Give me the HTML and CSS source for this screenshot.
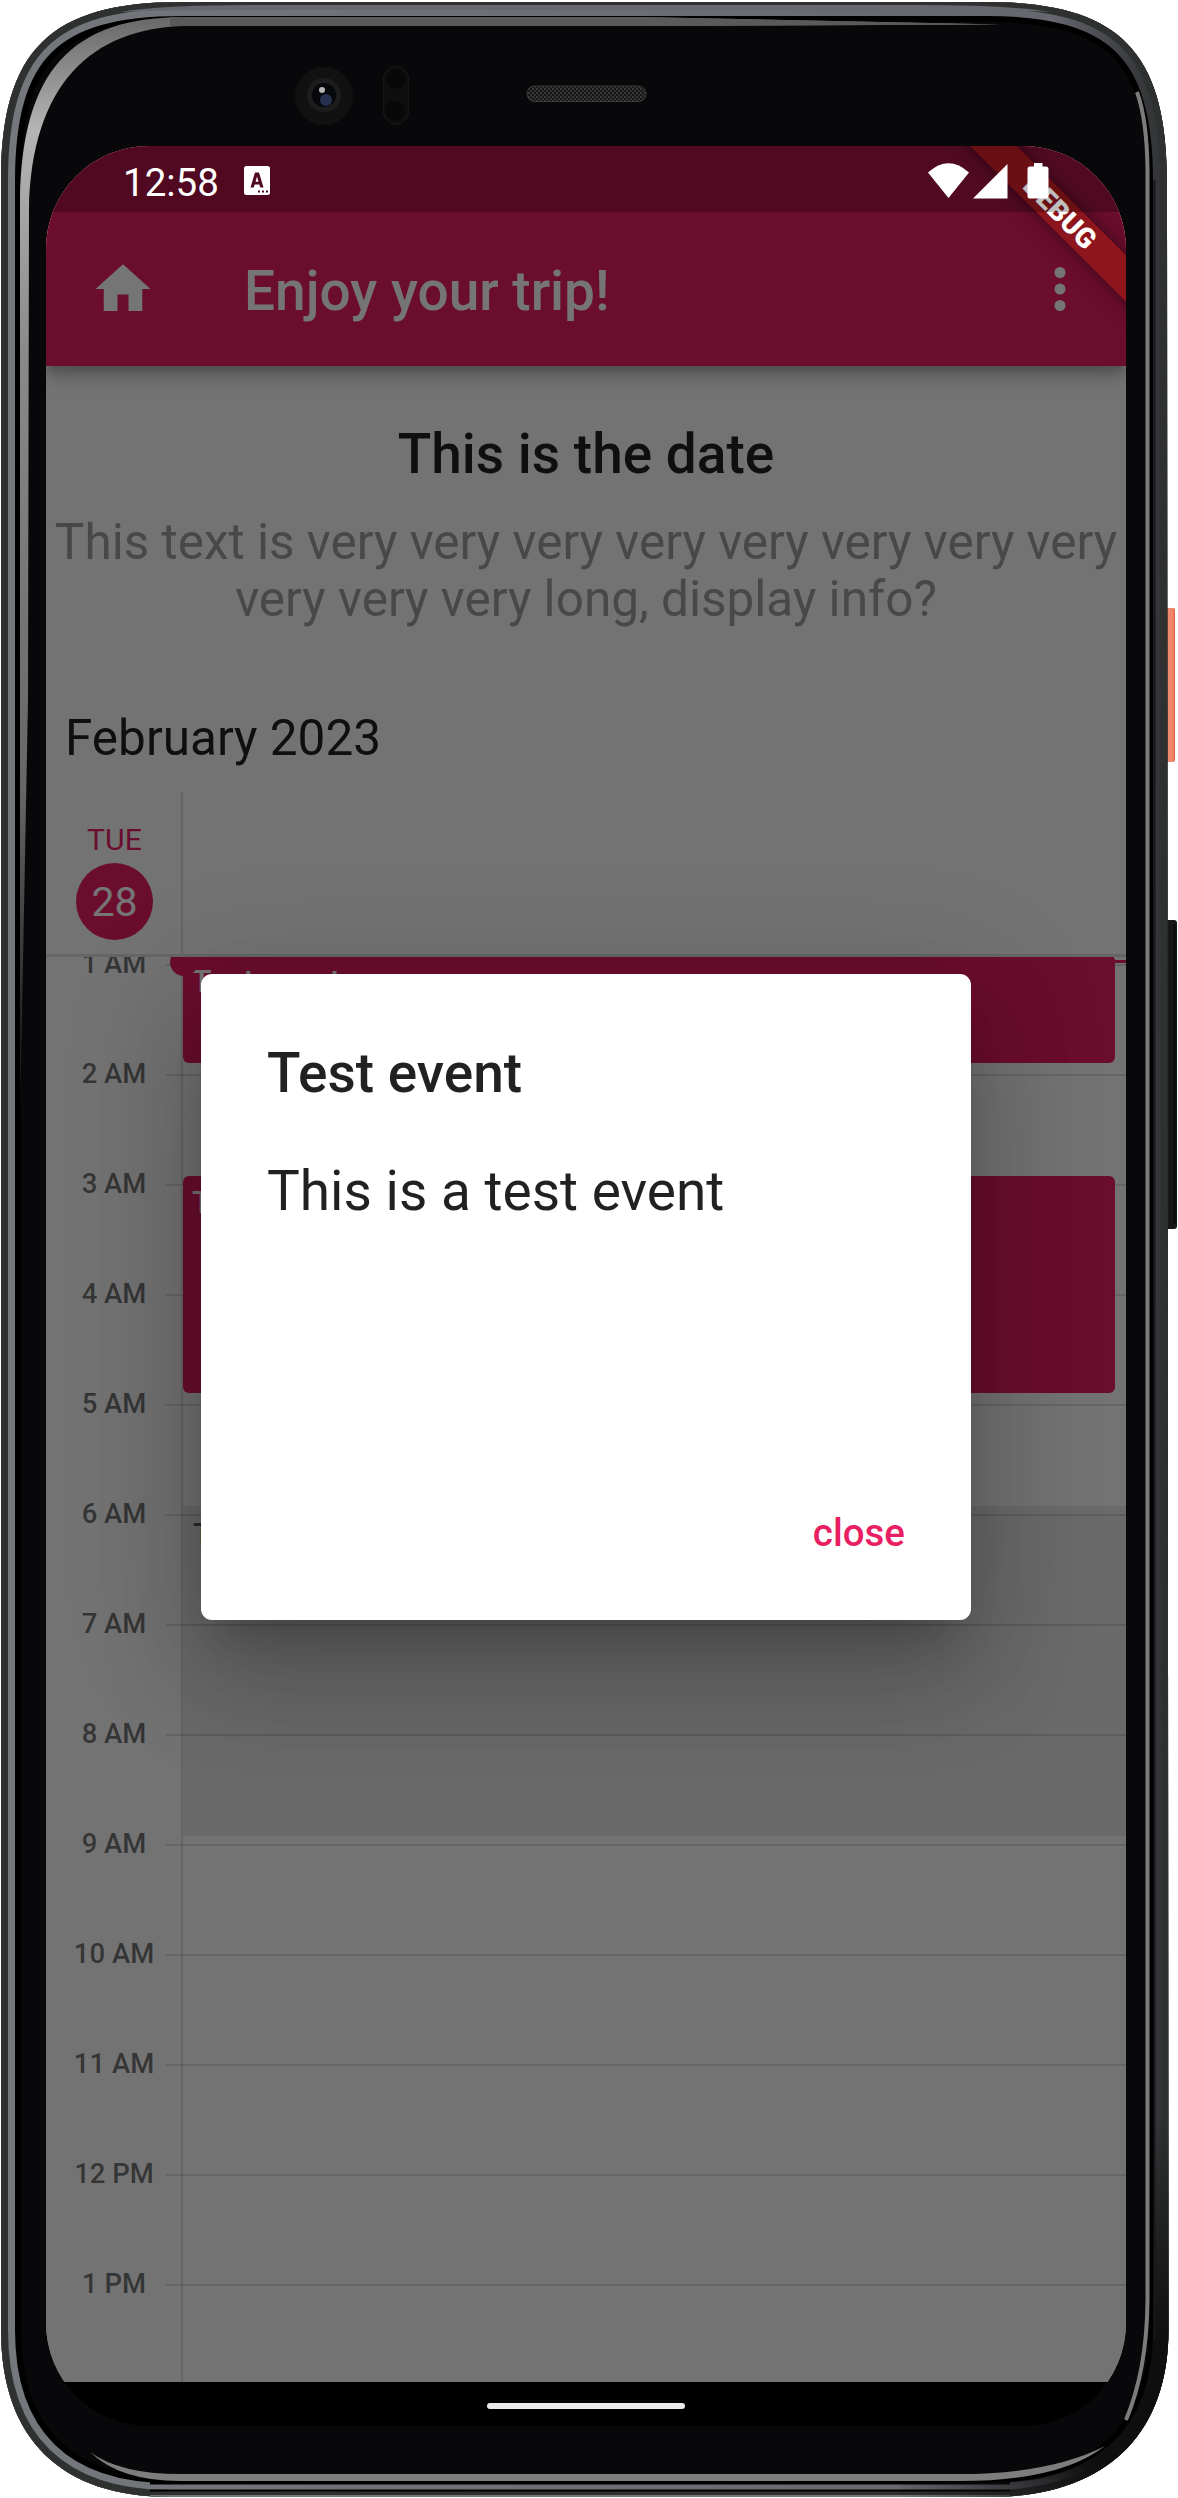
FILE: index.html
```
<!DOCTYPE html>
<html lang="en">
<head>
<meta charset="utf-8">
<title>Enjoy your trip!</title>
<link rel="stylesheet" href="styles.css">
</head>
<body>
<div class="phone">
  <svg class="frame" viewBox="0 0 1178 2498" aria-hidden="true">
    <defs>
      <path id="shell" d="M1 181C1 50 50 2 181 2H987C1118 2 1167 50 1167 181L1168.500 2330C1168.500 2440 1100 2497 990 2497H170C62 2497 1 2440 1 2330Z"/>
      <clipPath id="shellClip"><use href="#shell"/></clipPath>
      <linearGradient id="rail" x1="0" x2="1" y1="0" y2="0">
        <stop offset="0" stop-color="#74777c"/><stop offset=".9" stop-color="#66676f"/><stop offset=".97" stop-color="#3a3b3e"/><stop offset="1" stop-color="#303234"/>
      </linearGradient>
      <linearGradient id="lowerRim" x1="900" y1="2497" x2="1168" y2="2120" gradientUnits="userSpaceOnUse">
        <stop offset="0" stop-color="#0f0f10" stop-opacity="0"/><stop offset=".3" stop-color="#0f0f10"/><stop offset=".6" stop-color="#0f0f10"/><stop offset="1" stop-color="#0f0f10" stop-opacity="0"/>
      </linearGradient>
      <linearGradient id="glowLeft" x1="0" x2="0" y1="20" y2="1120" gradientUnits="userSpaceOnUse">
        <stop offset="0" stop-color="#6a6a6a"/><stop offset=".1" stop-color="#b5b5b5"/><stop offset=".3" stop-color="#8a8a8a"/><stop offset=".7" stop-color="#666"/><stop offset="1" stop-color="#0a0a0a"/>
      </linearGradient>
      <linearGradient id="power" x1="0" x2="1" y1="0" y2="0">
        <stop offset="0" stop-color="#e0573b"/><stop offset=".4" stop-color="#f08a70"/><stop offset=".8" stop-color="#f0846a"/><stop offset="1" stop-color="#d9603f"/>
      </linearGradient>
      <pattern id="mesh" width="4" height="4" patternUnits="userSpaceOnUse">
        <rect width="4" height="4" fill="#161616"/><circle cx="1" cy="1" r=".9" fill="#4a4a4a"/><circle cx="3" cy="3" r=".9" fill="#3e3e3e"/>
      </pattern>
    </defs>
    <rect x="1164" y="608" width="11" height="154" rx="2" fill="url(#power)"/>
    <rect x="1164" y="920" width="13" height="309" rx="3" fill="#161717"/>
    <path d="M1174.500 924V1224" stroke="#070707" stroke-width="1.500"/>
    <g clip-path="url(#shellClip)" fill="none">
      <use href="#shell" fill="#08080a"/>
      <use href="#shell" stroke="#000" stroke-width="40"/>
      <use href="#shell" stroke="url(#rail)" stroke-width="28"/>
      <use href="#shell" stroke="#2f3131" stroke-width="14"/>
      <path d="M120 12Q160 5 250 5H920Q1010 5 1050 12Q1010 10 920 10H250Q160 10 120 12Z" fill="#66676f"/>
      <path d="M150 2483H1010" stroke="#000" stroke-width="3"/>
      <path d="M150 2490.500H1010" stroke="#000" stroke-width="2"/>
      <path d="M150 2496H1010" stroke="#777" stroke-width="2"/>
      <path d="M900 2490H990C1100 2490 1161 2436 1161 2330V2120" stroke="url(#lowerRim)" stroke-width="16"/>
      <path d="M1154.500 180V2340" stroke="#17181a" stroke-width="2"/>
    </g>
    <path d="M20 1120V200C22 70 72 17 185 17H640L1000 24.500L640 26H185C92 28 31 84 29 210L28 700Z" fill="url(#glowLeft)"/>
    <path d="M170 17H640L1000 24.500L640 26H170Z" fill="#5a5a5a"/>
    <path d="M1137 92Q1147 120 1147.500 170V2300Q1147 2370 1126 2420" fill="none" stroke="#7c7c7c" stroke-width="4"/>
    <path d="M90 2452Q120 2474 180 2474H960Q1050 2474 1105 2446Q1060 2481 960 2481H180Q120 2481 90 2452Z" fill="#7c7d7d"/>
    <circle cx="324" cy="96" r="29" fill="#111112"/>
    <circle cx="324" cy="95" r="17" fill="#1c1c1c"/>
    <circle cx="324" cy="95" r="12" fill="#07080c"/>
    <circle cx="326" cy="100" r="6" fill="#26304f"/>
    <circle cx="322" cy="90" r="3" fill="#b5b5b5"/>
    <rect x="383.500" y="66.500" width="25" height="58" rx="12.500" fill="#0e0e0f" stroke="#171718"/>
    <circle cx="396" cy="79" r="10" fill="#080809"/><circle cx="395" cy="111" r="10" fill="#080809"/>
    <rect x="527" y="86" width="119" height="15.500" rx="7.500" fill="url(#mesh)" stroke="#3a3a3a"/>
  </svg>

  <main class="screen">
    <div class="app">
      <header class="appbar">
        <svg class="icon" viewBox="0 0 24 24"><path d="M10 20v-6h4v6h5v-8h3L12 3 2 12h3v8z"/></svg>
        <h1 class="appbar-title">Enjoy your trip!</h1>
        <svg class="icon" viewBox="0 0 24 24"><circle cx="12" cy="6" r="2"/><circle cx="12" cy="12" r="2"/><circle cx="12" cy="18" r="2"/></svg>
      </header>
      <section class="intro">
        <h2 class="intro-title">This is the date</h2>
        <p class="intro-text">This text is very very very very very very very very<br>very very very long, display info?</p>
      </section>
      <section class="calendar">
        <h3 class="month">February 2023</h3>
        <div class="day-head">
          <div class="day">
            <span class="weekday">TUE</span>
            <span class="date">28</span>
          </div>
        </div>
        <div class="timeline">
          <div class="hours">
            <div class="hour"><span>1 AM</span></div>
            <div class="hour"><span>2 AM</span></div>
            <div class="hour"><span>3 AM</span></div>
            <div class="hour"><span>4 AM</span></div>
            <div class="hour"><span>5 AM</span></div>
            <div class="hour"><span>6 AM</span></div>
            <div class="hour"><span>7 AM</span></div>
            <div class="hour"><span>8 AM</span></div>
            <div class="hour"><span>9 AM</span></div>
            <div class="hour"><span>10 AM</span></div>
            <div class="hour"><span>11 AM</span></div>
            <div class="hour"><span>12 PM</span></div>
            <div class="hour"><span>1 PM</span></div>
          </div>
          <div class="event event-one">Test event</div>
          <div class="event event-two">Test event</div>
          <div class="event event-busy">Test event</div>
          <div class="now"></div>
        </div>
      </section>
    </div>

    <div class="scrim">
      <div class="dialog" role="dialog">
        <h2 class="dialog-title">Test event</h2>
        <p class="dialog-text">This is a test event</p>
        <button class="dialog-close">close</button>
      </div>
    </div>

    <div class="banner">DEBUG</div>

    <div class="status">
      <span class="clock">12:58</span>
      <svg class="status-app" viewBox="0 0 26 29"><path fill="#fff" fill-rule="evenodd" d="M2.500 0H23.500Q26 0 26 2.500V26.500Q26 29 23.500 29H2.500Q0 29 0 26.500V2.500Q0 0 2.500 0ZM11 6.500L6.500 21.500H9.700L10.700 18.500H15.300L16.300 21.500H19.500L15 6.500ZM13 10.500L14.500 15.800H11.500Z"/><path fill="#4f0b22" d="M14 24.500h2v2h-2zM18 24.500h2v2h-2zM22 24.500h2v2h-2z"/></svg>
      <svg class="status-icons" viewBox="0 0 122 38"><g fill="#fff"><path d="M0 10.500Q20.500-8 41 10.500L20.500 36Z"/><path d="M45 36.500L79.500 2V36.500Z"/><path d="M106 1H114.500V4.500H118Q120.500 4.500 120.500 7V34Q120.500 36.500 118 36.500H101.500Q99.500 36.500 99.500 34V7Q99.500 4.500 101.500 4.500H106Z"/></g></svg>
    </div>

    <div class="navbar"><span class="pill"></span></div>
  </main>
</div>
</body>
</html>
```
FILE: styles.css
```
* { box-sizing: border-box; margin: 0; padding: 0; }

body {
  background: #fff;
  font-family: Roboto, "Liberation Sans", sans-serif;
}

.phone {
  position: relative;
  width: 1178px;
  height: 2498px;
  padding: 146px 52px 72px 46px;
  overflow: hidden;
}

.frame { position: absolute; inset: 0; width: 1178px; height: 2498px; }

.screen {
  position: relative;
  width: 1080px;
  height: 2280px;
  border-radius: 103px;
  overflow: hidden;
  background: #000;
}

.app {
  display: flex;
  flex-direction: column;
  height: 2236px;
  background: #fafafa;
}

.appbar {
  display: flex;
  align-items: center;
  flex: none;
  height: 220px;
  padding: 66px 33px 0 44px;
  background: #e91e63;
  color: #fff;
  box-shadow: 0 6px 11px -3px rgba(0,0,0,.2), 0 11px 14px rgba(0,0,0,.14), 0 3px 28px rgba(0,0,0,.12);
}

.icon { width: 66px; height: 66px; fill: currentColor; flex: none; }

.appbar-title {
  flex: 1;
  margin-left: 88px;
  padding-top: 3px;
  font-size: 55px;
  font-weight: 500;
  line-height: 64px;
}

.intro { padding-top: 56px; text-align: center; color: rgba(0,0,0,.87); }
.intro-title { font-size: 55px; font-weight: 500; line-height: 64px; }
.intro-text {
  margin-top: 28px;
  font-size: 49.5px;
  line-height: 57px;
  color: #9e9e9e;
  white-space: nowrap;
}

.calendar {
  display: flex;
  flex: 1;
  flex-direction: column;
  min-height: 0;
  padding-top: 81px;
}

.month {
  padding-left: 19px;
  font-size: 49.5px;
  font-weight: 400;
  line-height: 58px;
  color: rgba(0,0,0,.87);
}

.day-head {
  flex: none;
  height: 165px;
  margin-top: 25px;
  border-bottom: 3px solid rgba(0,0,0,.11);
}

.day {
  display: flex;
  flex-direction: column;
  align-items: center;
  width: 137px;
  height: 162px;
  padding: 30px 0 0 2px;
  border-right: 2px solid rgba(0,0,0,.12);
  color: #e91e63;
}

.weekday { font-size: 30.25px; line-height: 35px; }

.date {
  width: 77px;
  height: 77px;
  margin-top: 6px;
  border-radius: 50%;
  background: #e91e63;
  color: #fff;
  font-size: 41px;
  line-height: 78px;
  text-align: center;
}

.timeline { position: relative; flex: 1; min-height: 0; overflow: hidden; }

.hours {
  margin-top: -47px;
  background: linear-gradient(rgba(0,0,0,.12), rgba(0,0,0,.12)) 135px 0 / 2px 100% no-repeat;
  padding-bottom: 60px;
}

.hour {
  display: flex;
  align-items: center;
  height: 110px;
  background: linear-gradient(rgba(0,0,0,.12), rgba(0,0,0,.12)) 120px 54px / 960px 2px no-repeat;
}

.hour span {
  width: 136px;
  padding-bottom: 2px;
  font-size: 27.5px;
  font-weight: 500;
  line-height: 32px;
  text-align: center;
  color: rgba(0,0,0,.54);
}

.event {
  position: absolute;
  left: 137px;
  width: 932px;
  padding: 7px 9px;
  border-radius: 6px;
  background: #e91e63;
  color: #fff;
  font-size: 32px;
  font-weight: 500;
  line-height: 39px;
}
.event-one { top: -2px; height: 108px; }
.event-two { top: 219px; height: 217px; }
.event-busy {
  top: 549px;
  width: 943px;
  height: 330px;
  padding: 9px 10px;
  border-radius: 0;
  background: rgba(0,0,0,.08);
  color: rgba(0,0,0,.6);
}

.now {
  position: absolute;
  top: 3px;
  left: 138px;
  right: 0;
  height: 3px;
  background: #e91e63;
}
.now::before {
  content: "";
  position: absolute;
  top: -12px;
  left: -14px;
  width: 28px;
  height: 28px;
  border-radius: 50%;
  background: #e91e63;
}

.scrim {
  position: absolute;
  inset: 0 0 44px;
  display: flex;
  align-items: center;
  justify-content: center;
  padding-top: 66px;
  background: rgba(0,0,0,.54);
}

.dialog {
  display: flex;
  flex-direction: column;
  width: 770px;
  height: 646px;
  padding: 67px 66px 65px;
  border-radius: 11px;
  background: #fff;
  color: rgba(0,0,0,.87);
  box-shadow: 0 30px 41px -19px rgba(0,0,0,.2), 0 66px 104px 8px rgba(0,0,0,.14), 0 25px 126px 22px rgba(0,0,0,.12);
}

.dialog-title { font-size: 55px; font-weight: 500; line-height: 64px; }
.dialog-text { margin-top: 54px; font-size: 55px; line-height: 64px; }

.dialog-close {
  align-self: flex-end;
  margin-top: auto;
  border: 0;
  background: none;
  color: #e91e63;
  font: 500 38.5px/45px Roboto, sans-serif;
}

.banner {
  position: absolute;
  top: 49.5px;
  left: 864px;
  width: 300px;
  height: 33px;
  background: #8e151b;
  box-shadow: 0 0 16px rgba(0,0,0,.5);
  color: #fff;
  font-size: 28px;
  font-weight: 900;
  line-height: 33px;
  text-align: center;
  transform: rotate(45deg);
}

.status {
  position: absolute;
  inset: 0 0 auto;
  display: flex;
  align-items: center;
  height: 66px;
  padding: 0 76px 0 77px;
  background: rgba(0,0,0,.25);
  color: #fff;
}
.clock { width: 121px; padding-top: 6px; font-size: 38.5px; line-height: 45px; }
.status-app { width: 26px; height: 29px; margin-top: 3px; }
.status-icons { width: 122px; height: 38px; margin: 3px 0 0 auto; }

.navbar {
  display: flex;
  align-items: center;
  justify-content: center;
  height: 44px;
  padding-top: 4px;
}
.pill { width: 198px; height: 6px; border-radius: 3px; background: #ebebeb; }
```
